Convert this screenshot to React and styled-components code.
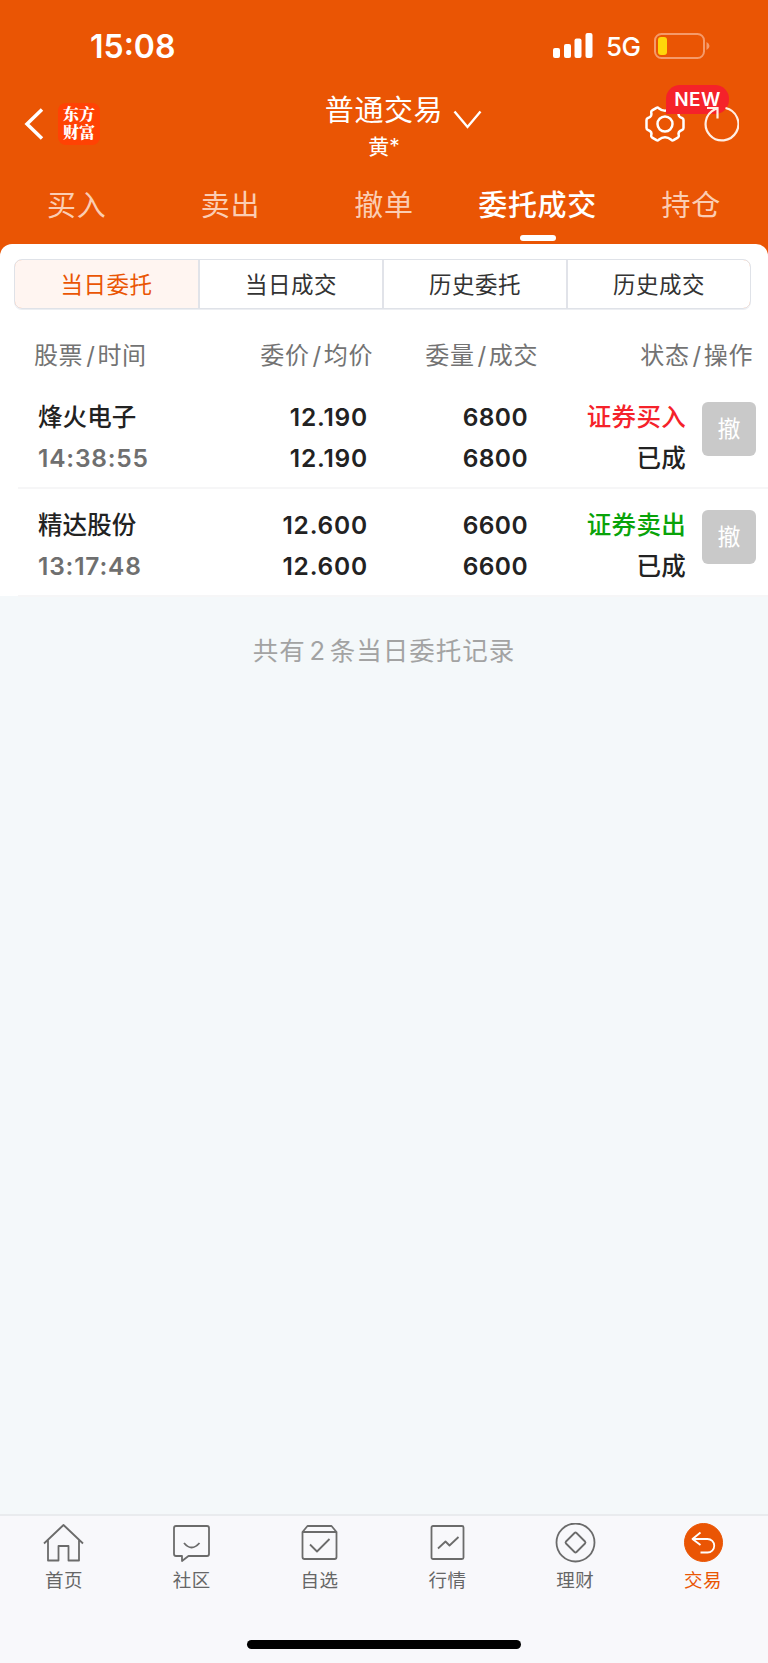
import styled, { createGlobalStyle } from "styled-components";

const GlobalStyle = createGlobalStyle`
	* {
		box-sizing: border-box;
	}
	body {
		margin: 0;
		font-family: Inter, "Noto Sans CJK SC", sans-serif;
	}
`;

const Container = styled.div`
	width: 768px;
	height: 1663px;
	display: flex;
	flex-direction: column;
	background-color: #f4f8fa;
	overflow: hidden;
`;

const Header = styled.header`
	height: 256px;
	flex-shrink: 0;
	background-color: #ea5504;
	color: white;
`;

const StatusBar = styled.div`
	height: 92px;
	padding: 0 58px 0 90px;
	display: flex;
	align-items: center;
	justify-content: space-between;
`;

const Clock = styled.span`
	padding-top: 2px;
	font-size: 32px;
	font-weight: 600;
	line-height: 90px;
`;

const StatusIcons = styled.div`
	display: flex;
	align-items: center;
`;

const Network = styled.span`
	width: 35px;
	margin: 2px 13px 0 13px;
	font-size: 26px;
	font-weight: 500;
	line-height: 40px;
	letter-spacing: -0.5px;
`;

const TopBar = styled.div`
	height: 72px;
	display: grid;
	grid-template-columns: 1fr auto 1fr;
`;

const TopLeft = styled.div`
	display: flex;
	align-items: center;
	padding: 0 0 9px 23px;
`;

const Logo = styled.div`
	width: 42px;
	height: 42px;
	margin-left: 14px;
	display: flex;
	flex-direction: column;
	align-items: center;
	justify-content: center;
	border-radius: 8px;
	background-color: #ff4204;
	font-family: "Noto Serif CJK SC", "Noto Sans CJK SC", serif;
	font-size: 16px;
	font-weight: 900;
	line-height: 18px;
	padding-bottom: 2px;
`;

const Title = styled.div`
	display: flex;
	flex-direction: column;
	align-items: center;
	padding-top: 1px;
`;

const TitleText = styled.div`
	font-size: 29px;
	line-height: 36px;
	letter-spacing: 0.6px;
`;

const Account = styled.div`
	font-size: 21px;
	line-height: 36px;
`;

const TopRight = styled.div`
	display: flex;
	align-items: flex-start;
	justify-content: space-between;
	padding: 0 29px 0 10px;
`;

const Actions = styled.div`
	position: relative;
	display: flex;
	gap: 18px;
	padding-top: 12px;
`;

const NewBadge = styled.span`
	position: absolute;
	top: -7px;
	left: 21px;
	width: 63px;
	height: 29px;
	border-radius: 14px 14px 14px 0;
	background-color: #f5222a;
	font-size: 19px;
	font-weight: 600;
	line-height: 29px;
	letter-spacing: 0.4px;
	text-align: center;
`;

const RefreshIcon = styled.svg`
	position: relative;
`;

const Tabs = styled.nav`
	padding-top: 14px;
	display: grid;
	grid-template-columns: repeat(5, 1fr);
`;

const Tab = styled.div`
	display: flex;
	flex-direction: column;
	align-items: center;
	gap: 1px;
	color: ${(props) => (props.$active ? "#fff" : "#fbcdb3")};
	font-size: 29px;
	font-weight: ${(props) => (props.$active ? 500 : 400)};
	line-height: 56px;
	letter-spacing: 0.7px;

	&::after {
		content: "";
		width: 36px;
		height: 6px;
		border-radius: 3px;
		background-color: ${(props) => (props.$active ? "#fff" : "transparent")};
	}
`;

const Sheet = styled.main`
	height: 352px;
	margin-top: -12px;
	padding-top: 15px;
	flex-shrink: 0;
	border-radius: 12px 12px 0 0;
	background-color: white;
`;

const Segments = styled.div`
	position: relative;
	height: 50px;
	margin: 0 17px 0 14px;
	display: grid;
	grid-template-columns: 185px 184px 184px 1fr;
	border: 1px solid #dfe2e8;
	border-radius: 8px;
	overflow: hidden;
	box-shadow: 0 1px 0 #eceef2;

	/* tinted rounded corners */
	&::after {
		content: "";
		position: absolute;
		inset: -1px;
		border: 1px solid #f0a885;
		border-radius: 8px;
		mask:
			linear-gradient(#000 0 0) 0 0 / 9px 9px no-repeat,
			linear-gradient(#000 0 0) 100% 0 / 9px 9px no-repeat,
			linear-gradient(#000 0 0) 0 100% / 9px 9px no-repeat,
			linear-gradient(#000 0 0) 100% 100% / 9px 9px no-repeat;
	}
`;

const Segment = styled.div`
	color: ${(props) => (props.$active ? "#ea5504" : "#333")};
	background-color: ${(props) => (props.$active ? "#fff5f1" : "#fff")};
	border-right: 2px solid #e1e3e9;
	font-size: 22.5px;
	line-height: 49px;
	letter-spacing: 0.5px;
	text-align: center;

	&:last-child {
		border-right: none;
	}
`;

const Columns = styled.div`
	height: 60px;
	margin-top: 12px;
	padding: 0 15px 0 34px;
	display: grid;
	grid-template-columns: 174px 165px 165px 1fr;
	color: #737373;
	font-size: 24px;
	line-height: 69px;
	letter-spacing: 0.6px;
`;

const Column = styled.div`
	text-align: ${(props) => props.$align || "left"};
	white-space: nowrap;
`;

const Slash = styled.span`
	margin: 0 2px 0 3px;
`;

const Order = styled.div`
	height: 108px;
	margin-left: 18px;
	padding: 16px 12px 0 20px;
	display: grid;
	grid-template-columns: 159px 171px 160px 158px 1fr;
	border-bottom: 2px solid #f6f6f7;
`;

const Cell = styled.div`
	display: flex;
	flex-direction: column;
	align-items: ${(props) => (props.$start ? "flex-start" : "flex-end")};
	color: #222;
	font-size: 24.5px;
	font-weight: ${(props) => (props.$text ? 500 : 600)};
	line-height: 41px;
	letter-spacing: ${(props) => props.$spacing || "0.1px"};
	white-space: nowrap;
`;

const Time = styled.span`
	color: #6f6f6f;
	font-weight: 600;
	letter-spacing: 0.8px;
`;

const Side = styled.span`
	color: ${(props) => (props.$sell ? "#09a309" : "#f5222a")};
`;

const CancelButton = styled.button`
	width: 54px;
	height: 54px;
	margin-top: 5px;
	padding: 0;
	justify-self: end;
	border: none;
	border-radius: 6px;
	background-color: #c9c9c9;
	color: white;
	font-family: inherit;
	font-size: 23px;
	line-height: 54px;
`;

const Summary = styled.div`
	flex: 1;
	padding-top: 35px;
	color: #a3a3a3;
	font-size: 25.5px;
	line-height: 40px;
	letter-spacing: 1px;
	word-spacing: -4.5px;
	text-align: center;
`;

const BottomNav = styled.nav`
	height: 149px;
	flex-shrink: 0;
	display: flex;
	flex-direction: column;
	justify-content: space-between;
	align-items: center;
	padding-bottom: 14px;
	border-top: 2px solid #e9ebee;
	background-color: #f8f8fb;
`;

const NavItems = styled.div`
	width: 100%;
	padding: 7px 1px 0 0;
	display: grid;
	grid-template-columns: repeat(6, 1fr);
`;

const NavItem = styled.div`
	display: flex;
	flex-direction: column;
	align-items: center;
	gap: 3px;
	color: ${(props) => (props.$active ? "#ea5504" : "#666")};
	font-size: 18.5px;
	line-height: 28px;
	letter-spacing: 0.5px;
`;

const HomeIndicator = styled.div`
	width: 274px;
	height: 9px;
	border-radius: 5px;
	background-color: black;
`;

const tabs = ["买入", "卖出", "撤单", "委托成交", "持仓"];
const segments = ["当日委托", "当日成交", "历史委托", "历史成交"];

const columns = [
	{ names: ["股票", "时间"] },
	{ names: ["委价", "均价"], align: "right" },
	{ names: ["委量", "成交"], align: "right" },
	{ names: ["状态", "操作"], align: "right" },
];

const orders = [
	{
		name: "烽火电子",
		time: "14:38:55",
		price: "12.190",
		average: "12.190",
		amount: "6800",
		filled: "6800",
		side: "证券买入",
		status: "已成",
	},
	{
		name: "精达股份",
		time: "13:17:48",
		price: "12.600",
		average: "12.600",
		amount: "6600",
		filled: "6600",
		side: "证券卖出",
		sell: true,
		status: "已成",
	},
];

const navItems = [
	{
		label: "首页",
		icon: <path d="M1 20.5 20.5 2 40 20.5M5 17v20.5h10.500V23h10v14.5H36V17" />,
	},
	{
		label: "社区",
		icon: (
			<>
				<path d="M5 3h31q2 0 2 2v26q0 2-2 2H17.500l-6.500 5v-5H5q-2 0-2-2V5q0-2 2-2Z" />
				<path d="M13 20q7.500 9 15.500 0" />
			</>
		),
	},
	{
		label: "自选",
		icon: (
			<>
				<path d="M3.500 9h34v25q0 2-2 2h-30q-2 0-2-2V9l5-6h24l5 6" />
				<path d="m11 21.500 7 7L30.500 16" />
			</>
		),
	},
	{
		label: "行情",
		icon: (
			<>
				<rect x="4.500" y="3" width="32" height="33" rx="1.500" />
				<path d="m11 25.500 7.500-7 4 4 9-8.500" />
			</>
		),
	},
	{
		label: "理财",
		icon: (
			<>
				<circle cx="20.500" cy="19.500" r="19" />
				<path d="M19.500 10q1-1 2 0l8.500 8.500q1 1 0 2L21.500 29q-1 1-2 0L11 20.500q-1-1 0-2Z" />
			</>
		),
	},
	{
		label: "交易",
		icon: (
			<>
				<circle cx="20.500" cy="19.500" r="19" fill="#ea5504" stroke="#ea5504" strokeWidth="1" />
				<path d="m17.500 9.500-8 6.500 8 6M10 16h14.500a6.500 6.500 0 0 1 0 13.500h-7" stroke="#fff" />
			</>
		),
	},
];

const App = () => {
	return (
		<Container>
			<GlobalStyle />
			<Header>
				<StatusBar>
					<Clock>15:08</Clock>
					<StatusIcons>
						<svg width="40" height="26" fill="#fff">
							<rect x="0" y="15" width="7" height="10" rx="2" />
							<rect x="11" y="11" width="7" height="14" rx="2" />
							<rect x="21.500" y="5.500" width="7" height="19.500" rx="2" />
							<rect x="32.500" y="0" width="7" height="25" rx="2" />
						</svg>
						<Network>5G</Network>
						<svg width="56" height="26" fill="none">
							<rect x="1" y="1" width="49" height="24" rx="6.500" stroke="#f59a6a" strokeWidth="2" />
							<rect x="4" y="4" width="9" height="18" rx="3" fill="#ffd60a" />
							<path d="M52.500 9q3 1.500 3 4t-3 4Z" fill="#f59a6a" />
						</svg>
					</StatusIcons>
				</StatusBar>
				<TopBar>
					<TopLeft>
						<svg width="21" height="32" fill="none" stroke="#fff" strokeWidth="3.500">
							<path d="M19 1.500 4 16l15 14.500" />
						</svg>
						<Logo>
							<span>东方</span>
							<span>财富</span>
						</Logo>
					</TopLeft>
					<Title>
						<TitleText>普通交易</TitleText>
						<Account>黄*</Account>
					</Title>
					<TopRight>
						<svg width="30" height="40" fill="none" stroke="#fff" strokeWidth="2.400">
							<path d="m1.500 19.500 13 15.500 13-15.500" />
						</svg>
						<Actions>
							<svg width="40" height="40" fill="none" stroke="#fff" strokeWidth="2.500" strokeLinejoin="round">
								<path d="M38.500 16q0-1.500-1.500-2-4.500-1.500-3.200-5.500.3-1.500-1-2.200L28.500 3.800q-1.200-.6-2.200.4-6.300 5-12.600 0-1-1-2.200-.4L7.200 6.300q-1.300.7-1 2.200Q7.500 12.500 3 14q-1.500.5-1.500 2v8q0 1.500 1.500 2 4.500 1.500 3.200 5.500-.3 1.500 1 2.200l4.300 2.500q1.200.6 2.200-.4 6.300-5 12.600 0 1 1 2.200.4l4.300-2.500q1.300-.7 1-2.200Q32.500 27.500 37 26q1.500-.5 1.500-2Z" />
								<circle cx="20" cy="20" r="7.500" />
							</svg>
							<NewBadge>NEW</NewBadge>
							<RefreshIcon width="36" height="40" fill="none" stroke="#ffeee4" strokeWidth="2.200">
								<path d="M22.500 4a16.400 16.400 0 1 1-10.500 1.200l3-.7M4 4h10.500v10.500" />
							</RefreshIcon>
						</Actions>
					</TopRight>
				</TopBar>
				<Tabs>
					{tabs.map((tab) => (
						<Tab key={tab} $active={tab === "委托成交"}>
							{tab}
						</Tab>
					))}
				</Tabs>
			</Header>
			<Sheet>
				<Segments>
					{segments.map((segment, index) => (
						<Segment key={segment} $active={index === 0}>
							{segment}
						</Segment>
					))}
				</Segments>
				<Columns>
					{columns.map(({ names, align }) => (
						<Column key={names[0]} $align={align}>
							{names[0]}
							<Slash>/</Slash>
							{names[1]}
						</Column>
					))}
				</Columns>
				{orders.map((order) => (
					<Order key={order.name}>
						<Cell $start $text>
							<span>{order.name}</span>
							<Time>{order.time}</Time>
						</Cell>
						<Cell $spacing="0.8px">
							<span>{order.price}</span>
							<span>{order.average}</span>
						</Cell>
						<Cell $spacing="0.4px">
							<span>{order.amount}</span>
							<span>{order.filled}</span>
						</Cell>
						<Cell $text $spacing="0.3px">
							<Side $sell={order.sell}>{order.side}</Side>
							<span>{order.status}</span>
						</Cell>
						<CancelButton>撤</CancelButton>
					</Order>
				))}
			</Sheet>
			<Summary>共有 2 条当日委托记录</Summary>
			<BottomNav>
				<NavItems>
					{navItems.map(({ label, icon }) => (
						<NavItem key={label} $active={label === "交易"}>
							<svg width="41" height="40" fill="none" stroke="#6b6b6b" strokeWidth="1.800" strokeLinejoin="round">
								{icon}
							</svg>
							{label}
						</NavItem>
					))}
				</NavItems>
				<HomeIndicator />
			</BottomNav>
		</Container>
	);
};

export default App;
